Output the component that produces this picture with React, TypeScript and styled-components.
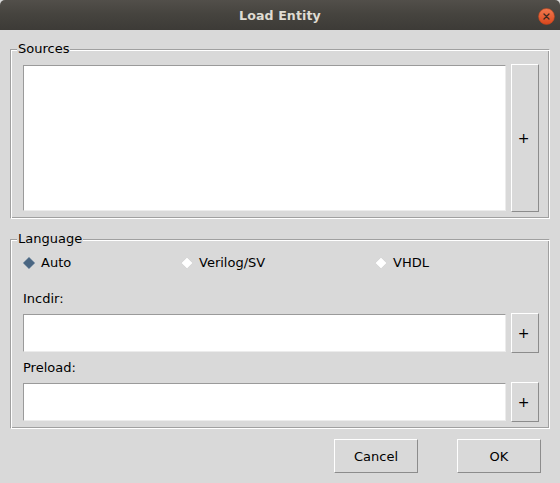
import styled, { createGlobalStyle } from 'styled-components';
import { useState } from 'react';

const GlobalStyle = createGlobalStyle`
  html, body {
    margin: 0;
    padding: 0;
    background: #d9d9d9;
  }
  * {
    box-sizing: border-box;
  }
`;

const Window = styled.div`
  width: 560px;
  height: 483px;
  display: flex;
  flex-direction: column;
  background: #d9d9d9;
  font-family: "DejaVu Sans", Verdana, sans-serif;
  font-size: 13px;
  color: #000;
  overflow: hidden;
`;

const TitleBar = styled.div`
  height: 30px;
  flex: none;
  display: grid;
  grid-template-columns: 1fr auto 1fr;
  align-items: center;
  background: linear-gradient(180deg, #524f4a 0%, #45433e 50%, #3d3b37 100%);
  border-radius: 5px 5px 0 0;
`;

const Title = styled.div`
  grid-column: 2;
  font-weight: bold;
  font-size: 12.6px;
  color: #dfdbd2;
  letter-spacing: 0.1px;
`;

const CloseButton = styled.div`
  grid-column: 3;
  justify-self: end;
  margin-right: 5px;
  margin-top: 2px;
  width: 17px;
  height: 17px;
  display: flex;
`;

const Body = styled.div`
  display: flex;
  flex-direction: column;
  padding: 0 10px;
`;

const Frame = styled.div<{ $top: number }>`
  margin-top: ${p => p.$top}px;
  display: flex;
  flex-direction: column;
  border: 1px solid;
  border-color: #a0a0a0 #ffffff #ffffff #a0a0a0;
  box-shadow: inset 1px 1px 0 #ffffff, inset -1px -1px 0 #a0a0a0;
  padding: 0 10px 6px 12px;
`;

const Legend = styled.div`
  align-self: flex-start;
  margin-top: -10px;
  margin-left: -6px;
  line-height: 17px;
  height: 17px;
  background: #d9d9d9;
  padding: 0 1px 0 1px;
`;

const Row = styled.div<{ $top: number; $height: number }>`
  margin-top: ${p => p.$top}px;
  height: ${p => p.$height}px;
  display: flex;
  align-items: center;
  gap: 5px;
`;

const Sunken = styled.div<{ $height: number }>`
  flex: 1;
  height: ${p => p.$height}px;
  background: #ffffff;
  border: 1px solid;
  border-color: #9a9a9a #ececec #ececec #9a9a9a;
`;

const PlusButton = styled.button<{ $height: number }>`
  width: 28px;
  height: ${p => p.$height}px;
  padding: 0 3px 0 0;
  background: #d9d9d9;
  border: 1px solid;
  border-color: #ffffff #8c8c8c #8c8c8c #ffffff;
  font-family: "DejaVu Sans", Verdana, sans-serif;
  font-size: 14px;
  color: #000;
  display: flex;
  align-items: center;
  justify-content: center;
`;

const RadioRow = styled.div`
  margin-top: 6px;
  height: 20px;
  display: grid;
  grid-template-columns: 158px 194px 1fr;
  align-items: center;
`;

const RadioItem = styled.label`
  display: flex;
  align-items: center;
  gap: 6px;
  line-height: 20px;
  cursor: pointer;
`;

const FieldLabel = styled.div<{ $top: number }>`
  margin-top: ${p => p.$top}px;
  line-height: 17px;
  height: 17px;
`;

const Footer = styled.div`
  margin-top: 10px;
  display: flex;
  justify-content: flex-end;
  gap: 39px;
  padding-right: 9px;
`;

const DialogButton = styled.button`
  width: 84px;
  height: 34px;
  background: #d9d9d9;
  border: 1px solid;
  border-color: #ffffff #8c8c8c #8c8c8c #ffffff;
  font-family: "DejaVu Sans", Verdana, sans-serif;
  font-size: 13px;
  color: #000;
  padding: 0;
`;

const Diamond = ({ on }: { on: boolean }) => (
  <svg width="12" height="12" viewBox="0 0 12 12">
    <polygon
      points="6,0.2 11.8,6 6,11.8 0.2,6"
      fill={on ? '#4a6682' : '#ffffff'}
      stroke={on ? '#6d86a0' : '#c4c4c4'}
      strokeWidth="0.5"
    />
  </svg>
);

const languages = ['Auto', 'Verilog/SV', 'VHDL'];

export default function App() {
  const [lang, setLang] = useState('Auto');

  return (
    <Window>
      <GlobalStyle />
      <TitleBar>
        <Title>Load Entity</Title>
        <CloseButton>
          <svg width="17" height="17" viewBox="0 0 17 17">
            <defs>
              <linearGradient id="cg" x1="0" y1="0" x2="0" y2="1">
                <stop offset="0" stopColor="#f27a4f" />
                <stop offset="1" stopColor="#d9461c" />
              </linearGradient>
            </defs>
            <circle cx="8.5" cy="8.5" r="8" fill="url(#cg)" stroke="#b8431d" strokeWidth="0.6" />
            <path d="M6 6 L11 11 M11 6 L6 11" stroke="#3a2a22" strokeWidth="1.3" strokeLinecap="round" />
          </svg>
        </CloseButton>
      </TitleBar>
      <Body>
        <Frame $top={19}>
          <Legend>Sources</Legend>
          <Row $top={7} $height={148}>
            <Sunken $height={146} />
            <PlusButton $height={148}>+</PlusButton>
          </Row>
        </Frame>

        <Frame $top={20}>
          <Legend>Language</Legend>
          <RadioRow>
            {languages.map(l => (
              <RadioItem key={l} onClick={() => setLang(l)}>
                <Diamond on={lang === l} />
                {l}
              </RadioItem>
            ))}
          </RadioRow>
          <FieldLabel $top={17}>Incdir:</FieldLabel>
          <Row $top={6} $height={40}>
            <Sunken $height={38} />
            <PlusButton $height={40}>+</PlusButton>
          </Row>
          <FieldLabel $top={6}>Preload:</FieldLabel>
          <Row $top={6} $height={40}>
            <Sunken $height={38} />
            <PlusButton $height={40}>+</PlusButton>
          </Row>
        </Frame>

        <Footer>
          <DialogButton>Cancel</DialogButton>
          <DialogButton>OK</DialogButton>
        </Footer>
      </Body>
    </Window>
  );
}
